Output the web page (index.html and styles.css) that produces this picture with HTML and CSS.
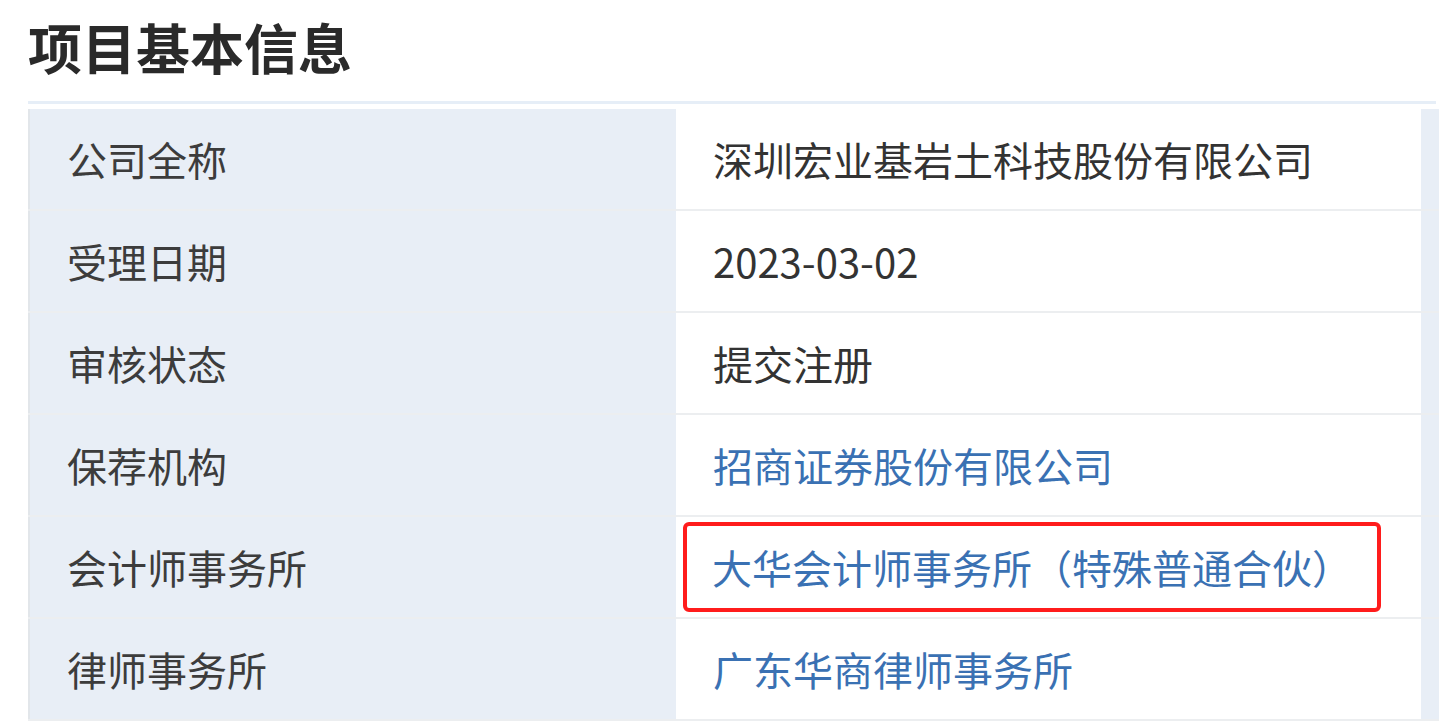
FILE: index.html
```html
<!DOCTYPE html>
<html lang="zh-CN">
<head>
    <meta charset="UTF-8">
    <meta name="viewport" content="width=device-width, initial-scale=1.0">
    <title>项目基本信息</title>
    <link rel="stylesheet" href="styles.css">
</head>
<body>

    <div class="page">
        <h1 class="title">项目基本信息</h1>
        <div class="rule"></div>
        <table class="info">
            <tr>
                <td class="label">公司全称</td>
                <td class="value">深圳宏业基岩土科技股份有限公司</td>
                <td class="edge"></td>
            </tr>
            <tr>
                <td class="label">受理日期</td>
                <td class="value">2023-03-02</td>
                <td class="edge"></td>
            </tr>
            <tr>
                <td class="label">审核状态</td>
                <td class="value">提交注册</td>
                <td class="edge"></td>
            </tr>
            <tr>
                <td class="label">保荐机构</td>
                <td class="value"><a href="#">招商证券股份有限公司</a></td>
                <td class="edge"></td>
            </tr>
            <tr>
                <td class="label">会计师事务所</td>
                <td class="value"><span class="mark"><a href="#">大华会计师事务所（特殊普通合伙）</a></span></td>
                <td class="edge"></td>
            </tr>
            <tr>
                <td class="label">律师事务所</td>
                <td class="value"><a href="#">广东华商律师事务所</a></td>
                <td class="edge"></td>
            </tr>
        </table>
    </div>

</body>
</html>
```

FILE: styles.css
```css
html, body { margin: 0; padding: 0; background: #fff; overflow: hidden; }
body { font-family: "Noto Sans CJK SC", "Noto Sans", sans-serif; color: #333; }
.page { padding: 14px 0 0 28px; }
.title { margin: 0; font-size: 54px; line-height: 66px; font-weight: bold; color: #2a2a2a; letter-spacing: 0; }
.rule { height: 3px; background: #e6eef7; margin-top: 21px; width: 1408px; }
.info { border-collapse: collapse; table-layout: fixed; width: 1411px; margin-top: 5px; border-left: 2px solid #e2e6ea; }
.info td { height: 100px; padding: 0; border-bottom: 2px solid #eceef0; font-size: 40px; vertical-align: middle; white-space: nowrap; }
.label { width: 609px; padding-left: 37px !important; background: #e8eef6; color: #3c3c3c; }
.value { width: 708px; padding-left: 37px !important; background: #fff; color: #333; }
.edge { width: 18px; background: #e8eef6; }
.value a { color: #3a71b3; text-decoration: none; }
.mark { display: inline-block; margin-left: -30px; padding: 12px 25px 12px 25px; border: 4px solid #ff1c1c; border-radius: 6px; }
```
